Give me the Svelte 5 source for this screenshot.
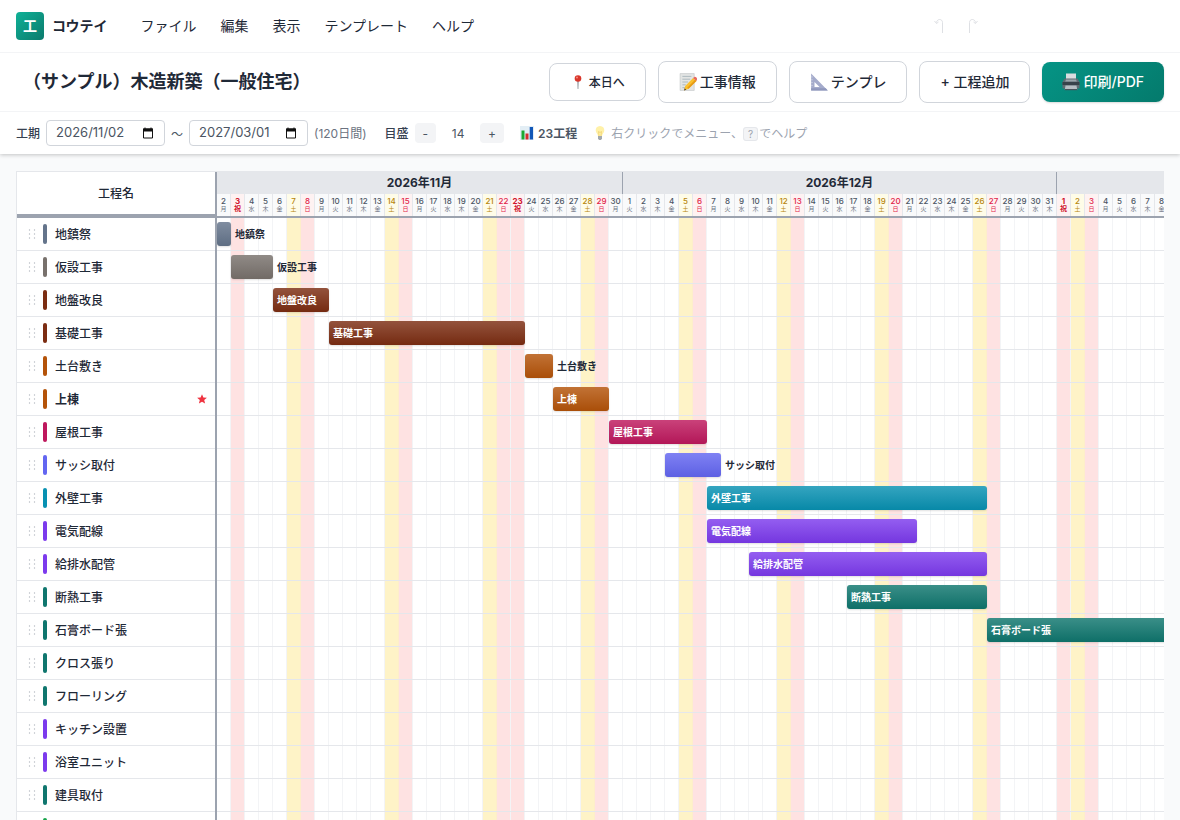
<script>
  const weekdays = ['日', '月', '火', '水', '木', '金', '土'];
  const holidays = ['2026-11-3', '2026-11-23', '2027-1-1'];
  const start = new Date(2026, 10, 2);
  const totalDays = 120;

  const days = Array.from({ length: totalDays }, (_, i) => {
    const date = new Date(start.getFullYear(), start.getMonth(), start.getDate() + i);
    const key = `${date.getFullYear()}-${date.getMonth() + 1}-${date.getDate()}`;
    const holiday = holidays.includes(key);
    const wd = date.getDay();
    return {
      month: `${date.getFullYear()}年${date.getMonth() + 1}月`,
      day: date.getDate(),
      weekday: holiday ? '祝' : weekdays[wd],
      kind: holiday ? 'holiday' : wd === 0 ? 'sunday' : wd === 6 ? 'saturday' : 'plain'
    };
  });

  const months = [];
  for (const d of days) {
    const last = months[months.length - 1];
    if (last && last.name === d.month) last.span += 1;
    else months.push({ name: d.month, span: 1 });
  }

  const slate = '#64748b';
  const stone = '#78716c';
  const rust = '#7c2d12';
  const amber = '#b45309';
  const rose = '#be185d';
  const indigo = '#6366f1';
  const cyan = '#0891b2';
  const violet = '#7c3aed';
  const teal = '#0f766e';
  const green = '#16a34a';

  const tasks = [
    { name: '地鎮祭', color: slate, from: 0, len: 1, outside: true },
    { name: '仮設工事', color: stone, from: 1, len: 3, outside: true },
    { name: '地盤改良', color: rust, from: 4, len: 4 },
    { name: '基礎工事', color: rust, from: 8, len: 14 },
    { name: '土台敷き', color: amber, from: 22, len: 2, outside: true },
    { name: '上棟', color: amber, from: 24, len: 4, milestone: true },
    { name: '屋根工事', color: rose, from: 28, len: 7 },
    { name: 'サッシ取付', color: indigo, from: 32, len: 4, outside: true },
    { name: '外壁工事', color: cyan, from: 35, len: 20 },
    { name: '電気配線', color: violet, from: 35, len: 15 },
    { name: '給排水配管', color: violet, from: 38, len: 17 },
    { name: '断熱工事', color: teal, from: 45, len: 10 },
    { name: '石膏ボード張', color: teal, from: 55, len: 18 },
    { name: 'クロス張り', color: teal, from: 73, len: 10 },
    { name: 'フローリング', color: teal, from: 76, len: 8 },
    { name: 'キッチン設置', color: violet, from: 84, len: 4 },
    { name: '浴室ユニット', color: violet, from: 86, len: 4 },
    { name: '建具取付', color: teal, from: 90, len: 6 },
    { name: '塗装工事', color: green, from: 96, len: 8 }
  ];

  let from = $state('2026/11/02');
  let to = $state('2027/03/01');
  let scale = $state(14);
</script>

{#snippet calendar()}
  <svg class="cal" viewBox="0 0 12 12" aria-hidden="true">
    <path d="M1.5 2h9v9h-9z" fill="none" stroke="#111" />
    <path d="M1 1.5h10V4.500H1z" fill="#111" />
    <path d="M3 0.500v2M9 0.500v2" stroke="#111" />
  </svg>
{/snippet}

<div class="app">
  <header class="top">
    <nav class="menubar">
      <div class="logo">
        <span class="mark">工</span>
        <span class="brand">コウテイ</span>
      </div>
      <div class="menus">
        <button>ファイル</button>
        <button>編集</button>
        <button>表示</button>
        <button>テンプレート</button>
        <button>ヘルプ</button>
      </div>
      <div class="history">
        <button aria-label="元に戻す" disabled>
          <svg viewBox="0 0 12 18"><path d="M8.500 16V5.500C8.500 1.500 3 1.500 2.500 5.500M0.500 4l2 2.500 2-1.500" /></svg>
        </button>
        <button aria-label="やり直す" disabled>
          <svg viewBox="0 0 12 18"><path d="M3.500 16V5.500C3.500 1.500 9 1.500 9.500 5.500M11.500 4l-2 2.500-2-1.500" /></svg>
        </button>
      </div>
    </nav>

    <div class="titlebar">
      <h1>（サンプル）木造新築（一般住宅）</h1>
      <div class="actions">
        <button class="small">
          <svg class="i16" viewBox="0 0 16 16">
            <path d="M7.300 7h1.400L8.400 15h-.8z" fill="#8b9299" />
            <circle cx="8" cy="4.500" r="3.300" fill="#d9362b" />
            <circle cx="7" cy="3.500" r="1" fill="#f58b80" />
          </svg>
          <span>本日へ</span>
        </button>
        <button>
          <svg class="i18" viewBox="0 0 16 16">
            <path d="M1 0.500h12.500V15.500H1z" fill="#e3e5e4" stroke="#c5c8c9" stroke-width=".6" />
            <path d="M3 3h8M3 5.500h7M3 8h5M3 10.500h3M3 13h3" stroke="#a8b4bb" stroke-width=".8" />
            <path d="M12.500 4.500l3 2.500-7 7-4 1.500 1-4z" fill="#fbc02d" />
            <path d="M15.500 7l-7 7-1.200-1 7-7z" fill="#e69a17" />
            <path d="M12.500 4.500l1.200-1c1-.5 2.800 1 2.300 2.200l-.5 1.300z" fill="#e8685f" />
            <path d="M4.500 15.500l.5-2 1.500 1.300z" fill="#4d4036" />
          </svg>
          <span>工事情報</span>
        </button>
        <button>
          <svg class="i18" viewBox="0 0 16 16">
            <path d="M1 0.500L15.800 15.500H1zM4 8v4.500h4.500z" fill="#a4abcb" fill-rule="evenodd" />
            <path d="M1 13.500h13l1.800 2H1z" fill="#8f97bc" />
            <path d="M1 3.500h1.500M1 6h1.500M1 8.500h1.500M1 11h1.500" stroke="#d5d9ea" stroke-width=".6" />
          </svg>
          <span>テンプレ</span>
        </button>
        <button><span>+ 工程追加</span></button>
        <button class="primary">
          <svg class="i18" viewBox="0 0 18 18">
            <path d="M4 0.500h10V7H4z" fill="#d8dcdf" />
            <path d="M2.500 5.500h13L17.500 9v6.500h-17V9z" fill="#5f6b73" />
            <path d="M0.500 9h17v3h-17z" fill="#37424a" />
            <path d="M4 6.500h10l.8 2H3.200z" fill="#9aa5ab" />
            <path d="M3.500 12.500h11l.8 4.500H2.700z" fill="#b6bec3" />
            <path d="M2.700 16h12.600v1.200H2.700z" fill="#47535b" />
          </svg>
          <span>印刷/PDF</span>
        </button>
      </div>
    </div>

    <div class="tools">
      <label class="strong" for="from">工期</label>
      <span class="date"><input id="from" bind:value={from} />{@render calendar()}</span>
      <span class="tilde">〜</span>
      <span class="date"><input aria-label="終了日" bind:value={to} />{@render calendar()}</span>
      <span class="muted">(120日間)</span>
      <div class="zoom">
        <span class="strong">目盛</span>
        <button onclick={() => (scale -= 1)}>-</button>
        <output>{scale}</output>
        <button onclick={() => (scale += 1)}>+</button>
      </div>
      <div class="count">
        <svg class="i14" viewBox="0 0 14 14">
          <path d="M0 0h14v14H0z" fill="#e3eef5" />
          <path d="M1.500 4.500h3V13.500h-3z" fill="#1da832" />
          <path d="M5.500 7.500h3v6h-3z" fill="#d32f2f" />
          <path d="M9.700 1h3.300v12.500H9.700z" fill="#1257b8" />
        </svg>
        <span>23工程</span>
      </div>
      <div class="hint">
        <svg class="i14" viewBox="0 0 14 14">
          <path d="M7 0C4 0 2.700 2.200 2.700 4.300 2.700 6.800 4.800 7.800 5 10h4c.2-2.200 2.300-3.200 2.300-5.700C11.300 2.200 10 0 7 0z" fill="#fff1a8" />
          <path d="M6 10L5.500 5.500l1.500 1 1.500-1L8 10" fill="none" stroke="#f0cf6a" stroke-width=".7" />
          <path d="M5 10h4v2.500L8 14H6l-1-1.500z" fill="#a3a9ad" />
        </svg>
        <span>右クリックでメニュー、<kbd>?</kbd>でヘルプ</span>
      </div>
    </div>
  </header>

  <main>
    <div class="chart" style:--day="{scale}px" style:--count={totalDays}>
      <section class="names">
        <div class="names-head">工程名</div>
        {#each tasks as t}
          <div class="name" class:bold={t.milestone}>
            <svg class="grip" viewBox="0 0 8 12" aria-hidden="true">
              {#each [2, 6, 10] as y}
                <circle cx="1.500" cy={y} r="0.700" />
                <circle cx="6.500" cy={y} r="0.700" />
              {/each}
            </svg>
            <span class="chip" style:background={t.color}></span>
            <span class="text">{t.name}</span>
            {#if t.milestone}
              <svg class="star" viewBox="0 0 10 10" aria-label="マイルストーン">
                <path d="M5 0.200l1.400 3.200 3.500.3-2.700 2.300.9 3.500L5 7.700 1.900 9.500l.9-3.500L.1 3.700l3.500-.3z" fill="#ef3340" />
              </svg>
            {/if}
          </div>
        {/each}
      </section>

      <section class="timeline">
        <div class="months">
          {#each months as m}
            <div class="month" style:grid-column="span {m.span}">{m.name}</div>
          {/each}
        </div>
        <div class="days">
          {#each days as d}
            <div class="day {d.kind}"><b>{d.day}</b><i>{d.weekday}</i></div>
          {/each}
        </div>
        <div class="plot">
          <div class="stripes">
            {#each days as d}<div class="stripe {d.kind}"></div>{/each}
          </div>
          <div class="rows">
            {#each tasks as t}
              <div class="row">
                <div class="bar" style:grid-column="{t.from + 1} / span {t.len}" style:background-color={t.color}>
                  {#if !t.outside}{t.name}{/if}
                </div>
                {#if t.outside}
                  <div class="bar-label" style:grid-column="{t.from + t.len + 1} / span 8">{t.name}</div>
                {/if}
              </div>
            {/each}
          </div>
        </div>
      </section>
    </div>
  </main>
</div>

<style>
  :global(body) {
    margin: 0;
    overflow: hidden;
    background: #f9fafb;
  }
  .app {
    display: flex;
    flex-direction: column;
    height: 100vh;
    font-family: Inter, 'Noto Sans CJK JP', sans-serif;
    font-size: 12px;
    color: #1f2937;
  }
  .app * {
    box-sizing: border-box;
  }
  button,
  input {
    font: inherit;
    color: inherit;
  }
  .top {
    flex: none;
    background: #fff;
    box-shadow: 0 1px 4px rgba(0, 0, 0, 0.22);
    z-index: 1;
  }
  .menubar {
    display: flex;
    align-items: center;
    height: 53px;
    padding: 0 16px;
    border-bottom: 1px solid #f3f4f6;
    font-size: 14px;
  }
  .logo {
    display: flex;
    align-items: center;
    gap: 8px;
    font-weight: 700;
  }
  .brand {
    padding-bottom: 2px;
  }
  .mark {
    display: grid;
    place-items: center;
    width: 28px;
    height: 28px;
    padding-bottom: 2px;
    border-radius: 4px;
    background: linear-gradient(135deg, #0fb197, #0b7a6c);
    color: #fff;
  }
  .menus {
    display: flex;
    margin-left: 21px;
  }
  .menus button {
    padding: 6px 12px 8px;
    border: 0;
    background: none;
  }
  .history {
    display: flex;
    gap: 12px;
    margin-left: auto;
    margin-right: 182px;
  }
  .history button {
    width: 20px;
    height: 20px;
    padding: 0;
    border: 0;
    background: none;
  }
  .history svg {
    display: block;
    width: 12px;
    height: 18px;
    margin: 0 auto;
    fill: none;
    stroke: #d5d8dd;
    stroke-width: 0.8;
  }
  .titlebar {
    display: flex;
    align-items: center;
    justify-content: space-between;
    height: 59px;
    padding: 0 16px 0 23px;
    border-bottom: 1px solid #f3f4f6;
  }
  h1 {
    margin: 0;
    padding-bottom: 4px;
    font-size: 18px;
    font-weight: 700;
  }
  .actions {
    display: flex;
    align-items: center;
    gap: 12px;
  }
  .actions button {
    display: flex;
    align-items: center;
    gap: 3px;
    height: 42px;
    padding: 0 20px;
    border: 1px solid #d1d5db;
    border-radius: 8px;
    background: #fff;
    font-size: 14px;
    font-weight: 500;
    white-space: nowrap;
  }
  .actions span {
    padding-bottom: 2px;
  }
  .actions .small {
    height: 38px;
    font-size: 12px;
  }
  .actions .primary {
    height: 40px;
    border: 0;
    background: linear-gradient(135deg, #059485, #047a6c);
    color: #fff;
    box-shadow: 0 1px 2px rgba(0, 0, 0, 0.15);
  }
  svg {
    flex: none;
  }
  .i14 {
    width: 14px;
    height: 14px;
  }
  .i16 {
    width: 16px;
    height: 16px;
  }
  .i18 {
    width: 18px;
    height: 18px;
  }
  .tools {
    display: flex;
    align-items: center;
    height: 42px;
    padding: 0 16px;
    gap: 6px;
    color: #4b5563;
    white-space: nowrap;
  }
  .tools > label,
  .tools > .muted,
  .tools div span {
    padding-bottom: 2px;
  }
  .strong {
    font-weight: 500;
    color: #374151;
  }
  .date {
    display: flex;
    align-items: center;
    width: 119px;
    height: 26px;
    padding: 0 10px 0 9px;
    border: 1px solid #d1d5db;
    border-radius: 4px;
    background: #fff;
  }
  .date input {
    flex: 1;
    min-width: 0;
    padding: 0 0 2px;
    border: 0;
    outline: 0;
    background: none;
    font-size: 13px;
  }
  .cal {
    width: 12px;
    height: 12px;
  }
  .muted {
    color: #6b7280;
  }
  .zoom {
    display: flex;
    align-items: center;
    gap: 6px;
    margin-left: 12px;
  }
  .zoom button {
    height: 20px;
    padding: 0 8px;
    border: 0;
    border-radius: 4px;
    background: #f3f4f6;
  }
  .zoom output {
    width: 32px;
    text-align: center;
  }
  .count {
    display: flex;
    align-items: center;
    gap: 4px;
    margin-left: 10px;
    font-weight: 600;
  }
  .hint {
    display: flex;
    align-items: center;
    gap: 4px;
    margin-left: 10px;
    color: #9ca3af;
  }
  kbd {
    padding: 0 4px;
    margin-right: 1px;
    border: 1px solid #e5e7eb;
    border-radius: 3px;
    background: #f3f4f6;
    font: inherit;
    font-size: 10px;
  }
  main {
    flex: 1;
    min-height: 0;
    padding: 17px 16px 0;
    overflow: hidden;
  }
  .chart {
    display: flex;
    border: 1px solid #e5e7eb;
    border-width: 1px 0 0 1px;
    background: #fff;
    overflow: hidden;
  }
  .names {
    flex: none;
    width: 200px;
    border-right: 2px solid #9ca3af;
  }
  .names-head {
    display: grid;
    place-items: center;
    height: 46px;
    padding-bottom: 2px;
    border-bottom: 4px solid #9ca3af;
    font-weight: 500;
  }
  .name {
    display: flex;
    align-items: center;
    height: 33px;
    padding: 0 8px 0 11px;
    border-bottom: 1px solid #e5e7eb;
    font-weight: 500;
  }
  .bold {
    font-weight: 700;
  }
  .grip {
    width: 8px;
    height: 12px;
    fill: #b4b9c1;
  }
  .chip {
    width: 4px;
    height: 20px;
    margin: 0 8px 0 7px;
    border-radius: 2px;
  }
  .text {
    flex: 1;
    padding-bottom: 2px;
  }
  .star {
    width: 10px;
    height: 10px;
  }
  .timeline {
    flex: 1;
    min-width: 0;
    overflow: hidden;
  }
  .months,
  .days,
  .stripes,
  .row {
    display: grid;
    grid-template-columns: repeat(var(--count), var(--day));
    width: max-content;
  }
  .month {
    height: 22px;
    border-right: 1px solid #9ca3af;
    background: #e5e7eb;
    font-weight: 700;
    line-height: 22px;
    text-align: center;
  }
  .days {
    border-bottom: 2px solid #9ca3af;
  }
  .day {
    display: flex;
    flex-direction: column;
    align-items: center;
    height: 22px;
    padding-top: 4px;
    border-right: 1px solid #e5e7eb;
    background: #f9fafb;
    color: #4b5563;
    font-size: 8px;
    line-height: 7px;
  }
  .day b {
    font-weight: 500;
  }
  .day i {
    font-size: 6px;
    font-style: normal;
    color: #6b7280;
  }
  .day.saturday {
    background: #fefce8;
    color: #b7860b;
  }
  .day.sunday {
    background: #fef2f2;
    color: #e11d48;
  }
  .day.holiday {
    background: #fef2f2;
    color: #d0142c;
  }
  .day.holiday b,
  .day.holiday i {
    font-weight: 700;
  }
  .day.holiday i {
    font-size: 7px;
  }
  .day.saturday i,
  .day.sunday i,
  .day.holiday i {
    color: inherit;
  }
  .plot {
    display: grid;
  }
  .stripes,
  .rows {
    grid-area: 1 / 1;
  }
  .stripe {
    border-right: 1px solid #f3f4f6;
  }
  .stripe.saturday {
    background: #fef3c7;
    border-color: #fdeecb;
  }
  .stripe.sunday,
  .stripe.holiday {
    background: #fee2e2;
  }
  .row {
    align-items: center;
    height: 33px;
    border-bottom: 1px solid #e5e7eb;
  }
  .bar {
    height: 24px;
    padding-left: 4px;
    border-radius: 3px;
    background-image: linear-gradient(rgba(255, 255, 255, 0.18), rgba(0, 0, 0, 0.06));
    box-shadow: 0 1px 2px rgba(0, 0, 0, 0.12);
    color: #fff;
    font-size: 10px;
    font-weight: 600;
    line-height: 24px;
    white-space: nowrap;
  }
  .bar-label {
    padding: 0 0 2px 4px;
    font-size: 10px;
    font-weight: 600;
    white-space: nowrap;
  }
</style>
